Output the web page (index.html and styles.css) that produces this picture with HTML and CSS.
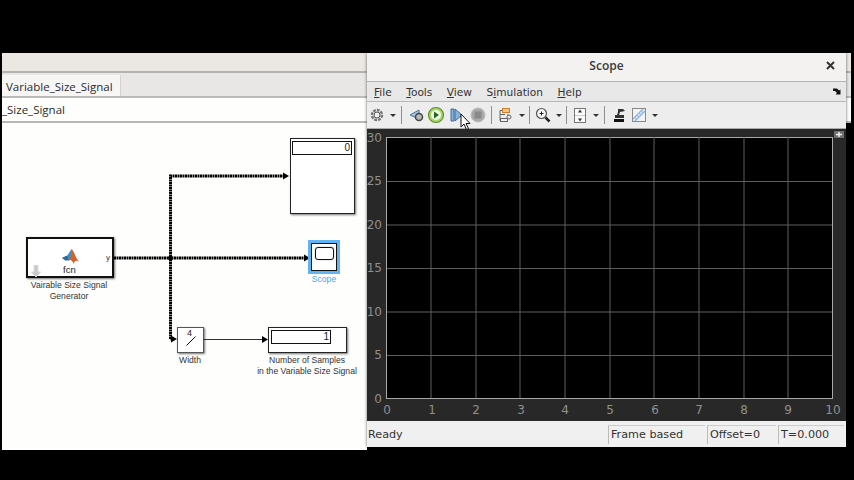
FILE: index.html
```html
<!DOCTYPE html>
<html lang="en">
<head>
  <meta charset="UTF-8" />
  <title>Scope</title>
  <link rel="stylesheet" href="styles.css">
</head>
<body>
  <div class="desktop">

    <!-- model window, behind the scope -->
    <div class="model">
      <div class="model-top"></div>
      <div class="model-tabs"><div class="tab">Variable_Size_Signal</div></div>
      <div class="model-path">_Size_Signal</div>
      <div class="canvas">
        <svg class="wires" width="365" height="327" viewBox="2 123 365 327">
          <g class="bus">
            <path d="M170.5 339V176H284" />
            <path d="M114 258H305" />
            <path d="M170.5 339H173" />
          </g>
          <circle cx="170.5" cy="258" r="2.5" fill="#000" />
          <path d="M204 339.500H263" stroke="#333" fill="none" />
          <path d="M283 172.500l6 3.500l-6 3.500zM304 254.500l6 3.500l-6 3.500zM171 335.500l6 3.500l-6 3.500zM262 336l6 3.500l-6 3.500z" fill="#000" />
        </svg>

        <div class="block display-big">
          <div class="readout">0</div>
        </div>

        <div class="block fcn">
          <svg class="matlab" width="17" height="15" viewBox="0 0 16 14">
            <path d="M0 8.500l5-2.500l4-6l2 8l-5 3z" fill="#3f8fc4" />
            <path d="M9 0c2 1 4 9 7 12c-3-2-4-1-5 2c-1-3-3-5-5-3l3-6z" fill="#d2622b" />
            <path d="M0 8.500l3.500 2.500l2.500-1l-1-4z" fill="#2a6a9e" />
          </svg>
          <span class="fcn-name">fcn</span>
          <span class="fcn-port">y</span>
          <svg class="down" width="12" height="13" viewBox="0 0 12 13">
            <path d="M4 0h4v7h3l-5 5l-5-5h3z" fill="#c9c9c9" stroke="#dcdcdc" />
          </svg>
        </div>
        <div class="label fcn-label">Vairable Size Signal<br>Generator</div>

        <div class="scope-block"><div class="scope-screen"></div></div>
        <div class="label scope-label">Scope</div>

        <div class="block width">
          <span class="width-num">4</span>
          <svg class="slash" width="10" height="10" viewBox="0 0 10 10">
            <path d="M0.500 9.500L9.500 0.500" stroke="#111" />
          </svg>
        </div>
        <div class="label width-label">Width</div>

        <div class="block display-small">
          <div class="readout">1</div>
        </div>
        <div class="label samples-label">Number of Samples<br>in the Variable Size Signal</div>
      </div>
    </div>

    <!-- scope window -->
    <div class="scope">
      <div class="titlebar">
        <span>Scope</span>
        <svg class="close" width="9" height="9" viewBox="0 0 9 9">
          <path d="M1 1l7 7M8 1l-7 7" stroke="#333" stroke-width="2" />
        </svg>
      </div>

      <div class="menubar">
        <span><u>F</u>ile</span>
        <span><u>T</u>ools</span>
        <span><u>V</u>iew</span>
        <span>S<u>i</u>mulation</span>
        <span><u>H</u>elp</span>
        <svg class="dock" width="8" height="7" viewBox="0 0 8 7">
          <path d="M0 0.500h4l2 2l1.500-1v5h-5l1.500-1.500l-2-2h-2z" fill="#111" />
        </svg>
      </div>

      <div class="toolbar">
        <svg class="tool" width="20" height="20" viewBox="0 0 20 20">
          <circle cx="10" cy="10" r="5" fill="none" stroke="#777" stroke-width="2.500" stroke-dasharray="2.800 1" />
          <circle cx="10" cy="10" r="3" fill="#eee" stroke="#555" />
        </svg>
        <i class="caret"></i>
        <i class="sep sep-a"></i>
        <svg class="tool" width="20" height="20" viewBox="0 0 20 20">
          <path d="M4 10l9-5v9z" fill="#a8c4e0" stroke="#50759b" />
          <circle cx="13" cy="12" r="3.500" fill="#bbb" stroke="#444" stroke-width="1.500" />
        </svg>
        <svg class="tool" width="20" height="20" viewBox="0 0 20 20">
          <circle cx="10" cy="10" r="7.500" fill="#a9d36b" stroke="#5f8f2f" stroke-width="1.200" />
          <circle cx="10" cy="10" r="5" fill="#f2f7e6" />
          <path d="M8 6.500l5 3.500l-5 3.500z" fill="#1f6a1f" />
        </svg>
        <svg class="tool step" width="20" height="20" viewBox="0 0 20 20">
          <path d="M4 4h3v12h-3z" fill="#86b2de" stroke="#3d6c9e" />
          <path d="M8 4l7 6l-7 6z" fill="#86b2de" stroke="#3d6c9e" />
        </svg>
        <svg class="tool step" width="20" height="20" viewBox="0 0 20 20">
          <circle cx="10" cy="10" r="7" fill="#a9a9a9" stroke="#bdbdbd" />
          <rect x="6.500" y="6.500" width="7" height="7" fill="#8a8a8a" />
        </svg>
        <i class="sep sep-b"></i>
        <svg class="tool" width="20" height="20" viewBox="0 0 20 20">
          <rect x="6.500" y="3.500" width="7" height="4" fill="#f3c48e" stroke="#d07f2c" />
          <rect x="4.500" y="13.500" width="7" height="3" fill="#eee" stroke="#666" />
          <path d="M4 5.500h2M4 5.500v10M4 9.500h5M12 9v2" fill="none" stroke="#666" />
          <circle cx="13" cy="12" r="2" fill="#eee" stroke="#666" />
        </svg>
        <i class="caret"></i>
        <i class="sep"></i>
        <svg class="tool" width="20" height="20" viewBox="0 0 20 20">
          <circle cx="8.500" cy="8.500" r="5" fill="#f4f4f4" stroke="#555" stroke-width="1.200" />
          <path d="M6.500 8.500h4M8.500 6.500v4" stroke="#222" />
          <path d="M12.500 12.500l4 4" stroke="#222" stroke-width="2.500" />
        </svg>
        <i class="caret"></i>
        <i class="sep"></i>
        <svg class="tool" width="20" height="20" viewBox="0 0 20 20">
          <rect x="4.500" y="3.500" width="11" height="14" fill="#fafafa" stroke="#777" />
          <path d="M10 4.500l2 3h-4zM10 16.500l2-3h-4z" fill="#333" />
          <path d="M5 10.500h10" stroke="#ccc" />
        </svg>
        <i class="caret"></i>
        <i class="sep sep-c"></i>
        <svg class="tool" width="20" height="20" viewBox="0 0 20 20">
          <path d="M9 4h5l2 2l-5 1l-1 3h5v3H6v-3h2l1-3z" fill="#333" />
          <path d="M5 14h10v3H5z" fill="#111" />
        </svg>
        <svg class="tool" width="20" height="20" viewBox="0 0 20 20">
          <rect x="3.500" y="3.500" width="13" height="13" fill="#f2f2f2" stroke="#888" />
          <path d="M5 15L15 5" stroke="#8fb8dc" stroke-width="4" />
          <path d="M5 15L15 5" stroke="#e2eef8" stroke-width="1.500" stroke-dasharray="2 1" />
        </svg>
        <i class="caret"></i>
      </div>

      <div class="plot">
        <svg class="axes" width="479" height="292" viewBox="367 129 479 292">
          <rect x="386.500" y="137.500" width="446" height="261" fill="#000" stroke="#a8a8a8" />
          <g class="grid">
            <path d="M431 137V398M476 137V398M520 137V398M565 137V398M610 137V398M654 137V398M699 137V398M744 137V398M788 137V398" />
            <path d="M387 181.500H832M387 225H832M387 268.500H832M387 312H832M387 355.500H832" />
          </g>
          <g class="ticks-y">
            <text x="382" y="142">30</text>
            <text x="382" y="185">25</text>
            <text x="382" y="229">20</text>
            <text x="382" y="272">15</text>
            <text x="382" y="316">10</text>
            <text x="382" y="359">5</text>
            <text x="382" y="403">0</text>
          </g>
          <g class="ticks-x">
            <text x="387" y="414">0</text>
            <text x="432" y="414">1</text>
            <text x="476" y="414">2</text>
            <text x="521" y="414">3</text>
            <text x="565" y="414">4</text>
            <text x="610" y="414">5</text>
            <text x="655" y="414">6</text>
            <text x="699" y="414">7</text>
            <text x="744" y="414">8</text>
            <text x="788" y="414">9</text>
            <text x="833" y="414">10</text>
          </g>
          <rect x="834" y="131" width="10" height="7" fill="#6e6e6e" />
          <path d="M836 134.500h6M839 132v5" stroke="#eee" stroke-width="1.500" />
        </svg>
      </div>

      <div class="statusbar">
        <span class="ready">Ready</span>
        <span class="cell frame">Frame based</span>
        <span class="cell offset">Offset=0</span>
        <span class="cell time">T=0.000</span>
      </div>
    </div>

    <svg class="cursor" width="12" height="18" viewBox="0 0 12 18">
      <path d="M1 1v13l3-3l2.500 5.500l2-1l-2.500-5h4z" fill="#fff" stroke="#111" />
    </svg>
  </div>
</body>
</html>
```

FILE: styles.css
```css
* {
  box-sizing: border-box;
}
html, body {
  margin: 0;
  background: #000;
}
.desktop {
  position: relative;
  width: 854px;
  height: 480px;
  overflow: hidden;
  background: #000;
  font-family: "DejaVu Sans", sans-serif;
}

/* model window */
.model {
  position: absolute;
  left: 2px;
  top: 53px;
  width: 849px;
  height: 397px;
  display: flex;
  flex-direction: column;
}
.model-top {
  height: 20px;
  background: #ebe8e4;
  border-bottom: 2px solid #b5b3b0;
}
.model-tabs {
  height: 25px;
  background: #e9e7e5;
  border-bottom: 2px solid #bdbbb8;
}
.tab {
  width: 119px;
  height: 21px;
  margin-top: 2px;
  padding-left: 4px;
  font-family: "Open Sans", sans-serif;
  font-size: 11.500px;
  line-height: 23px;
  color: #2b2b2b;
  background: #f7f6f5;
  border-right: 1px solid #d5d3d0;
}
.model-path {
  height: 25px;
  font-family: "Open Sans", sans-serif;
  font-size: 11.500px;
  line-height: 24px;
  color: #2b2b2b;
  background: #fefefd;
  border-bottom: 2px solid #b9b7b4;
}
.canvas {
  position: relative;
  flex: 1;
  width: 365px;
  background: #fefefd;
}
.wires {
  position: absolute;
  left: 0;
  top: 0;
}
.bus path {
  fill: none;
  stroke: #000;
  stroke-width: 3;
  stroke-dasharray: 2 0.500;
}

/* blocks sit on the diagram at their own coordinates */
.block {
  position: absolute;
  background: #fff;
  border: 1px solid #222;
  box-shadow: 1px 1px 2px rgba(0,0,0,0.55);
}
.readout {
  position: absolute;
  border: 1px solid #111;
  background: #fff;
  text-align: right;
  font-family: "Liberation Sans", sans-serif;
  font-size: 10px;
  line-height: 11px;
  padding-right: 1px;
  color: #222;
}
.display-big {
  left: 288px;
  top: 15px;
  width: 65px;
  height: 76px;
}
.display-big .readout {
  left: 1px;
  top: 2px;
  width: 60px;
  height: 14px;
}
.display-small {
  left: 266px;
  top: 204px;
  width: 79px;
  height: 26px;
}
.display-small .readout {
  left: 2px;
  top: 2px;
  width: 60px;
  height: 14px;
}
.fcn {
  left: 24px;
  top: 114px;
  width: 88px;
  height: 41px;
  border: 2px solid #111;
}
.matlab {
  position: absolute;
  left: 34px;
  top: 10px;
}
.fcn-name {
  position: absolute;
  left: 35px;
  top: 25px;
  font-family: "Liberation Sans", sans-serif;
  font-size: 9.500px;
  color: #222;
}
.fcn-port {
  position: absolute;
  right: 2px;
  top: 14px;
  font-family: "Liberation Sans", sans-serif;
  font-size: 8px;
  color: #333;
}
.down {
  position: absolute;
  left: 2px;
  top: 26px;
}
.scope-block {
  position: absolute;
  left: 306px;
  top: 117px;
  width: 32px;
  height: 34px;
  padding: 3px;
  background: #fff;
  border: 3px solid #62b5f5;
}
.scope-block::before {
  content: "";
  position: absolute;
  inset: 0;
  border: 1.500px solid #111;
}
.scope-screen {
  position: relative;
  margin: 1px 0 0 1px;
  width: 19px;
  height: 13px;
  border: 1px solid #111;
  border-radius: 3px;
  box-shadow: 0 0 1px #444;
}
.width {
  left: 175px;
  top: 204px;
  width: 27px;
  height: 26px;
  border-color: #555;
}
.width-num {
  position: absolute;
  left: 9px;
  top: 0;
  font-family: "Liberation Sans", sans-serif;
  font-size: 9px;
  color: #222;
}
.slash {
  position: absolute;
  left: 8px;
  top: 8px;
}
.label {
  position: absolute;
  font-family: "Liberation Sans", sans-serif;
  font-size: 8.600px;
  line-height: 11px;
  text-align: center;
  color: #333;
  white-space: nowrap;
}
.fcn-label {
  left: 7px;
  top: 157px;
  width: 120px;
}
.scope-label {
  left: 302px;
  top: 151px;
  width: 40px;
  color: #4aa8f0;
}
.width-label {
  left: 168px;
  top: 232px;
  width: 40px;
}
.samples-label {
  left: 245px;
  top: 232px;
  width: 120px;
}

/* scope window */
.scope {
  position: absolute;
  left: 367px;
  top: 53px;
  width: 479px;
  height: 394px;
  display: flex;
  flex-direction: column;
  background: #eeeeee;
  box-shadow: 0 0 3px rgba(0,0,0,0.6);
}
.titlebar {
  height: 29px;
  display: flex;
  align-items: center;
  justify-content: center;
  position: relative;
  padding-bottom: 4px;
  background: #f3f2f0;
  border-bottom: 1px solid #b4b4b3;
  font-family: "Open Sans", sans-serif;
  font-weight: 600;
  font-size: 12px;
  color: #3a3a3a;
}
.close {
  position: absolute;
  right: 11px;
  top: 8px;
}
.menubar {
  height: 20px;
  display: flex;
  align-items: center;
  gap: 14.500px;
  padding: 1px 7px 0;
  position: relative;
  background: #e9e8e9;
  border-bottom: 1px solid #b9b9b9;
  font-size: 10.600px;
  color: #333;
}
.dock {
  position: absolute;
  right: 5px;
  top: 6px;
}
.toolbar {
  height: 27px;
  display: flex;
  align-items: center;
  background: #ededed;
  border-bottom: 1px solid #aaa;
}
.tool {
  flex: none;
}
.tool.step {
  margin-left: 1px;
}
.caret {
  flex: none;
  width: 10px;
  height: 3px;
  position: relative;
}
.caret::after {
  content: "";
  position: absolute;
  left: 3px;
  top: 0;
  border: 3px solid transparent;
  border-top-color: #333;
  border-bottom: 0;
}
.sep {
  flex: none;
  width: 1px;
  height: 18px;
  margin: 0 3px;
  background: #8f8f8f;
}
.sep-a {
  margin: 0 4px;
}
.sep-b {
  margin: 0 4px 0 3px;
}
.sep-c {
  margin: 0 4px;
}
.plot {
  height: 292px;
  background: #282828;
}
.axes {
  display: block;
}
.grid path {
  fill: none;
  stroke: #5e5e5e;
  stroke-width: 1;
}
.axes text {
  font-family: "DejaVu Sans", sans-serif;
  font-size: 12px;
  fill: #8f8f8f;
}
.ticks-y text {
  text-anchor: end;
}
.ticks-x text {
  text-anchor: middle;
}
.statusbar {
  flex: 1;
  display: flex;
  align-items: center;
  gap: 2px;
  padding-right: 2px;
  background: #f0f0f0;
  font-size: 11.200px;
  color: #333;
}
.ready {
  flex: 1;
  padding-left: 1px;
}
.cell {
  height: 19px;
  line-height: 18px;
  padding-left: 2px;
  border-left: 1px solid #bbb;
  border-top: 1px solid #ccc;
}
.frame {
  width: 97px;
}
.offset {
  width: 69px;
}
.time {
  width: 66px;
}
.cursor {
  position: absolute;
  left: 460px;
  top: 113px;
}
```
